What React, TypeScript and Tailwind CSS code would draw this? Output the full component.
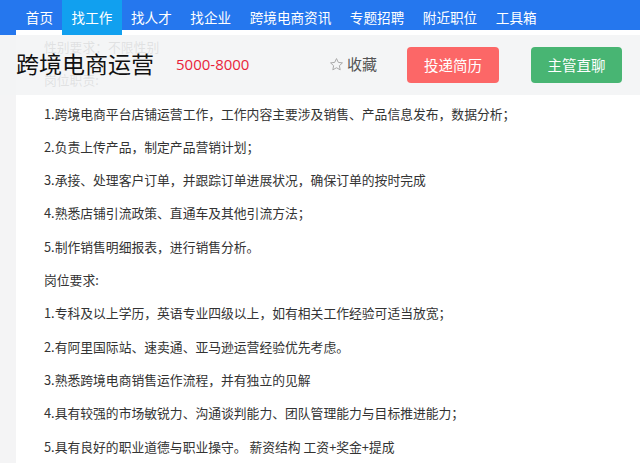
import React from "react";

const navItems = ["首页", "找工作", "找人才", "找企业", "跨境电商资讯", "专题招聘", "附近职位", "工具箱"];

const lines = [
  "性别要求：不限性别",
  "岗位职责:",
  "1.跨境电商平台店铺运营工作，工作内容主要涉及销售、产品信息发布，数据分析；",
  "2.负责上传产品，制定产品营销计划；",
  "3.承接、处理客户订单，并跟踪订单进展状况，确保订单的按时完成",
  "4.熟悉店铺引流政策、直通车及其他引流方法；",
  "5.制作销售明细报表，进行销售分析。",
  "岗位要求:",
  "1.专科及以上学历，英语专业四级以上，如有相关工作经验可适当放宽；",
  "2.有阿里国际站、速卖通、亚马逊运营经验优先考虑。",
  "3.熟悉跨境电商销售运作流程，并有独立的见解",
  "4.具有较强的市场敏锐力、沟通谈判能力、团队管理能力与目标推进能力；",
  "5.具有良好的职业道德与职业操守。 薪资结构 工资+奖金+提成",
];

export default function App() {
  return (
    <div
      className="relative w-[640px] h-[463px] overflow-hidden bg-[#f4f4f5]"
      style={{ fontFamily: '"Noto Sans CJK SC", "Noto Sans", sans-serif' }}
    >
      <nav className="flex h-[35px] bg-[#2577ee] pl-[16.5px] text-[13.6px] text-white">
        {navItems.map((item) => (
          <div
            key={item}
            className={
              "flex items-center px-[9.3px] " + (item === "找工作" ? "bg-[#11a0ef]" : "")
            }
          >
            {item}
          </div>
        ))}
      </nav>
      <div className="ml-[16px] bg-white pl-[28px] mt-[-5px] text-[12.8px] leading-[33.3px] text-[#333]">
        {lines.map((l) => (
          <div key={l} className="whitespace-nowrap">{l}</div>
        ))}
      </div>
      <div className="absolute left-0 right-0 top-[35px] flex h-[60px] items-center bg-[#f3f4f5]/[0.9] pl-[16px]">
        <div className="w-[160px] text-[23px] text-[#111] leading-none mb-[4px] whitespace-nowrap">跨境电商运营</div>
        <div className="w-[153px] text-[15px] text-[#e91f3a] mb-[2px]" style={{ fontFamily: '"Open Sans", "Noto Sans", sans-serif' }}>5000-8000</div>
        <div className="w-[78px] flex items-center text-[15px] text-[#555] mb-[1px]">
          <svg width="15" height="15" viewBox="0 0 24 24" className="mr-[3px]" fill="none" stroke="#aaa" strokeWidth="1.6" strokeLinejoin="round">
            <path d="M12 2.5l2.9 6.1 6.6.8-4.9 4.5 1.3 6.6L12 17.2l-5.9 3.3 1.3-6.6-4.9-4.5 6.6-.8z" />
          </svg>
          收藏
        </div>
        <button className="flex h-[36px] w-[92px] items-center justify-center rounded-[4px] bg-[#fc6767] text-[14.5px] text-white">
          投递简历
        </button>
        <button className="ml-[32px] flex h-[36px] w-[91px] items-center justify-center rounded-[4px] bg-[#48b573] text-[14.5px] text-white">
          主管直聊
        </button>
      </div>
    </div>
  );
}
